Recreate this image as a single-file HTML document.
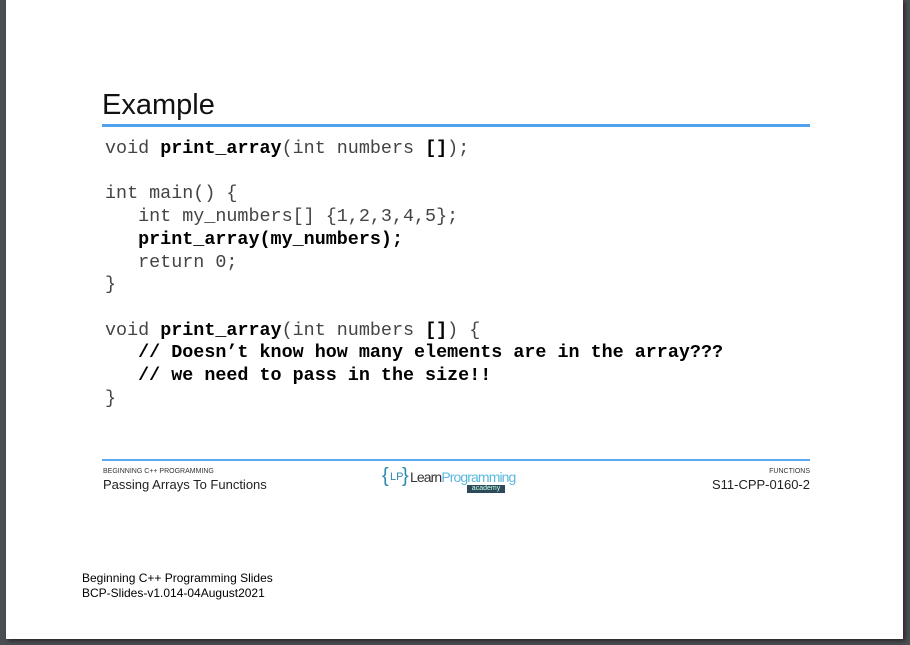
<!DOCTYPE html>
<html><head><meta charset="utf-8"><style>
html,body{margin:0;padding:0;}
body{width:910px;height:645px;background:#4b4e52;position:relative;overflow:hidden;font-family:"Liberation Sans",sans-serif;}
.page{position:absolute;left:6px;top:0;width:897px;height:639px;background:#fff;box-shadow:2px 2px 4px rgba(0,0,0,.5);}
.a{position:absolute;white-space:pre;}
.code{font-family:"Liberation Mono",monospace;font-size:18.4px;color:#444;line-height:22.7px;}
b{font-weight:bold;color:#000;}
</style></head><body>
<div class="page"></div>
<div class="a" style="left:102px;top:89px;font-size:29px;color:#111;">Example</div>
<div class="a" style="left:102px;top:124px;width:708px;height:3px;background:#4fa3ee;"></div>
<div class="a code" style="left:105px;top:138px;">void <b>print_array</b>(int numbers <b>[]</b>);

int main() {
   int my_numbers[] {1,2,3,4,5};
   <b>print_array(my_numbers);</b>
   return 0;
}

void <b>print_array</b>(int numbers <b>[]</b>) {
   <b>// Doesn’t know how many elements are in the array???</b>
   <b>// we need to pass in the size!!</b>
}</div>
<div class="a" style="left:102px;top:459px;width:708px;height:2px;background:#5aaaf0;"></div>
<div class="a" style="left:103px;top:468px;font-size:7px;color:#333;">BEGINNING C++ PROGRAMMING</div>
<div class="a" style="left:103px;top:477px;font-size:13px;color:#222;">Passing Arrays To Functions</div>
<div class="a" style="right:100px;top:468px;font-size:7px;color:#333;text-align:right;">FUNCTIONS</div>
<div class="a" style="right:100px;top:477px;font-size:13px;color:#222;text-align:right;">S11-CPP-0160-2</div>
<div class="a" style="left:382px;top:465px;font-size:20px;color:#2d8ab0;">{</div>
<div class="a" style="left:390px;top:471px;font-size:11px;color:#2d8ab0;">LP</div>
<div class="a" style="left:402px;top:465px;font-size:20px;color:#2d8ab0;">}</div>
<div class="a" style="left:410px;top:469px;font-size:14px;color:#333;letter-spacing:-0.9px;">Learn<span style="color:#5ab8e0">Programming</span></div>
<div class="a" style="left:467px;top:485px;width:38px;height:8px;background:#2d4a5a;color:#cfe;font-size:7px;line-height:8px;text-align:center;">academy</div>
<div class="a" style="left:82px;top:571px;font-size:12px;color:#000;line-height:15px;">Beginning C++ Programming Slides
BCP-Slides-v1.014-04August2021</div>
</body></html>
